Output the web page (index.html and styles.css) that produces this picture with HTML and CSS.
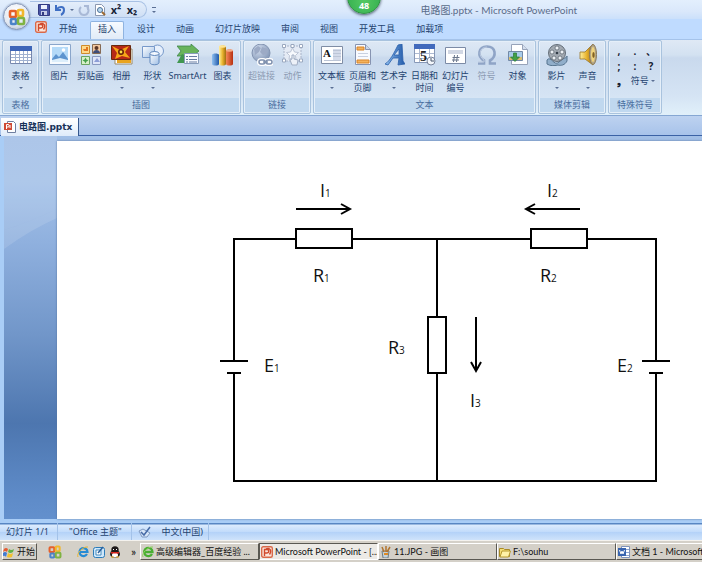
FILE: index.html
```html
<!DOCTYPE html>
<html lang="zh-CN">
<head>
<meta charset="utf-8">
<title>电路图.pptx - Microsoft PowerPoint</title>
<link rel="stylesheet" href="styles.css">
</head>
<body>
<svg class="defs" aria-hidden="true">
  <defs>
    <linearGradient id="gold" x1="0" x2="1"><stop offset="0" stop-color="#fff0a0"/><stop offset=".5" stop-color="#e8b430"/><stop offset="1" stop-color="#a06c10"/></linearGradient>
    <linearGradient id="blue" x1="0" x2="1"><stop offset="0" stop-color="#8fc0f0"/><stop offset="1" stop-color="#2058a8"/></linearGradient>
    <linearGradient id="red" x1="0" x2="1"><stop offset="0" stop-color="#f48858"/><stop offset="1" stop-color="#b83010"/></linearGradient>
    <linearGradient id="pale" x1="0" y1="0" x2="1" y2="1"><stop offset="0" stop-color="#fff"/><stop offset="1" stop-color="#9dbde4"/></linearGradient>
    <radialGradient id="globe" cx=".35" cy=".3" r=".75"><stop offset="0" stop-color="#d4dff0"/><stop offset="1" stop-color="#8094b4"/></radialGradient>
    <symbol id="ppt" viewBox="0 0 12 12"><rect x=".7" y=".7" width="10.600" height="10.600" rx="1.500" fill="#fbe6dc" stroke="#d9694a" stroke-width="1.400"/><path d="M3.500 10V3.500h2.500a1.700 1.700 0 0 1 0 3.500h-2.500M5 3c4-2 6 2 3.500 5.500" fill="none" stroke="#d0492c" stroke-width="1.400"/></symbol>
    <symbol id="pptdoc" viewBox="0 0 12 12"><path d="M3.500.500h6l2 2v9h-8z" fill="#fff" stroke="#6f7fa0"/><path d="M0 2h8v7H0z" fill="#cf4a35"/><path d="M2.500 8V3.500h1.500a1.200 1.200 0 0 1 0 2.500h-1.500M6 4v3" fill="none" stroke="#fff"/></symbol>
    <symbol id="office" viewBox="0 0 18 18"><g fill="none" stroke-width="2.600"><rect x="2" y="3" width="6" height="6" rx="1" stroke="#e5602b"/><rect x="10" y="2" width="5" height="6" rx="1" stroke="#f1b72c"/><rect x="3" y="11" width="5" height="5" rx="1" stroke="#4b83c8"/><rect x="10" y="10" width="6" height="6" rx="1" stroke="#7fb342"/></g></symbol>
  </defs>
</svg>
<div class="app">
  <header class="titlebar">
    <div class="qat">
      <button aria-label="保存"><svg width="12" height="12" viewBox="0 0 12 12"><path d="M.5.500h11v11h-10l-1-1z" fill="#4854a4" stroke="#323b82"/><path d="M3 1h6v4H3z" fill="#eef2fc"/><path d="M3 7h6v4H3z" fill="#c6cde8"/><path d="M4 8h2v3H4z" fill="#323b82"/></svg></button>
      <button aria-label="撤消"><svg width="12" height="12" viewBox="0 0 12 12"><path d="M2 1v5h5M2.500 5.500C5 2 10 2 10 6c0 2-1 4-3 5" fill="none" stroke="#3f6fc4" stroke-width="2"/></svg></button>
      <i class="arrow"></i>
      <button aria-label="重复"><svg width="12" height="12" viewBox="0 0 12 12"><path d="M3 3C0 6 2 11 6 11s6-5 3-8M6 2h4v4" fill="none" stroke="#a9b9d6" stroke-width="2"/></svg></button>
      <button aria-label="打印预览"><svg width="12" height="12" viewBox="0 0 12 12"><path d="M1.500.500h6l3 3v8h-9z" fill="#fff" stroke="#8b98b0"/><circle cx="6" cy="6" r="2.500" fill="#b9d8ef" stroke="#4b6f96"/><path d="M8 8l3 3" stroke="#9b6a34" stroke-width="2"/></svg></button>
      <button class="script">x²</button>
      <button class="script">x₂</button>
    </div>
    <button class="customise" aria-label="自定义快速访问工具栏"><i class="arrow"></i></button>
    <h1>电路图.pptx - Microsoft PowerPoint</h1>
    <button class="orb" aria-label="Office 按钮"><svg width="18" height="18"><use href="#office"/></svg></button>
    <div class="ball">48</div>
  </header>

  <nav class="tabs">
    <svg class="appicon" width="12" height="12"><use href="#ppt"/></svg>
    <button>开始</button><button class="active">插入</button><button>设计</button><button>动画</button><button>幻灯片放映</button><button>审阅</button><button>视图</button><button>开发工具</button><button>加载项</button>
  </nav>

  <main class="ribbon">
    <section class="group">
      <div class="tools">
        <button><svg viewBox="0 0 22 22"><path d="M.5 2.500h21v17H.500z" fill="#fff" stroke="#7787ad"/><path d="M0 2h22v5H0z" fill="#3d65b8"/><path d="M1 10.500h20M1 13.500h20M1 16.500h20M5.500 7v12M9.500 7v12M13.500 7v12M17.500 7v12" stroke="#9fb0cf"/></svg><span>表格</span><i class="arrow"></i></button>
      </div>
      <h2>表格</h2>
    </section>
    <section class="group">
      <div class="tools">
        <button><svg viewBox="0 0 22 22"><path d="M.5.500h21v20H.500z" fill="#f7fbff" stroke="#8aa6cb"/><path d="M3 3h16v15H3z" fill="#b4daf8"/><path d="M3 15l4-5 3 3 4-5 5 7v3H3z" fill="#5c94cf"/><path d="M3 16l8-2 8 2v2H3z" fill="#dceefb"/><circle cx="14.500" cy="6" r="1.800" fill="#fff"/></svg><span>图片</span></button>
        <button><svg viewBox="0 0 22 22"><path d="M1.500 1.500h8v8h-8z" fill="#ffd98a" stroke="#cf8c2c"/><path d="M3 5h3V3h2v4H4z" fill="#e17820"/><path d="M12.500.500h8v9h-8z" fill="#f5c9a0" stroke="#856a55"/><circle cx="16.500" cy="4" r="2" fill="#5b3829"/><path d="M13 9c0-4 7-4 7 0z" fill="#3e4c78"/><path d="M1.500 12.500h8v8h-8z" fill="#d8f0c9" stroke="#6ba562"/><path d="M5.500 13.500l1 2 2 1-2 1-1 2-1-2-2-1 2-1z" fill="#43a04a"/><path d="M12.500 12.500h8v8h-8z" fill="#dfe5f8" stroke="#8a99c0"/><path d="M14 18l3-4 3 4z" fill="#8d9dd6"/></svg><span>剪贴画</span></button>
        <button><svg viewBox="0 0 22 22"><path d="M4 5h17v15H4z" fill="#fff" stroke="#998866"/><path d="M6 7h14v12H6z" fill="#e9a420"/><path d="M.5 1.500h19v14H.500z" fill="#b62817" stroke="#68280e"/><path d="M1 2l8 4 9-4-4 6 5 6-8-2-7 3 2-6z" fill="#f7a718"/><circle cx="10" cy="8" r="3" fill="#682008"/><circle cx="10" cy="8" r="1.400" fill="#ffdf48"/></svg><span>相册</span><i class="arrow"></i></button>
        <button><svg viewBox="0 0 22 22"><circle cx="15.500" cy="7" r="6" fill="#e7f0fc" stroke="#7799ca"/><path d="M.5 2.500h12v11H.500z" fill="url(#pale)" stroke="#7799ca"/><path d="M8 9.500v9c0 3 9 3 9 0v-9" fill="url(#pale)" stroke="#5f87bc"/><ellipse cx="12.500" cy="9.500" rx="4.500" ry="2" fill="#f4f9ff" stroke="#5f87bc"/></svg><span>形状</span><i class="arrow"></i></button>
        <button class="wide"><svg viewBox="0 0 22 22"><path d="M0 2h14V0l8 7-6 5H0l4-5z" fill="#69b45b" stroke="#40864b" stroke-width=".8"/><path d="M0 19l5-9 5 2v7z" fill="#419750"/><path d="M7.500 9.500h14v10h-14z" fill="#f8faff" stroke="#879cbb"/><path d="M9 12.500h2m1 0h8M9 15.500h2m1 0h8M9 18h2m1 0h8" stroke="#667ca1"/></svg><span>SmartArt</span></button>
        <button><svg viewBox="0 0 22 22"><path d="M0 11c0-2 7-2 7 0v9c0 2-7 2-7 0z" fill="url(#blue)"/><path d="M7 3c0-2 7-2 7 0v17c0 2-7 2-7 0z" fill="url(#gold)"/><path d="M14 7c0-2 7-2 7 0v13c0 2-7 2-7 0z" fill="url(#red)"/><ellipse cx="10.500" cy="2.500" rx="3.500" ry="1.200" fill="#ffe596"/><ellipse cx="17.500" cy="6.500" rx="3.500" ry="1.200" fill="#f5ac87"/></svg><span>图表</span></button>
      </div>
      <h2>插图</h2>
    </section>
    <section class="group">
      <div class="tools">
        <button disabled><svg viewBox="0 0 22 22"><circle cx="10" cy="9" r="9" fill="url(#globe)" stroke="#8293b1"/><path d="M3 5l4-3 3 2-2 4-4 3M11 3l6 2-1 5-4 1-3-3" fill="#9caac5"/><g fill="none" stroke="#fff" stroke-width="4"><rect x="8" y="16" width="6" height="4" rx="2"/><rect x="15" y="16" width="6" height="4" rx="2"/></g><g fill="none" stroke="#7f90ae" stroke-width="1.500"><rect x="8" y="16" width="6" height="4" rx="2"/><rect x="15" y="16" width="6" height="4" rx="2"/><path d="M12 18h5"/></g></svg><span>超链接</span></button>
        <button disabled><svg viewBox="0 0 22 22"><path d="M2 2h17v15H2z" fill="#e5ebf5" stroke="#a9b4c9" stroke-dasharray="2 1"/><path d="M10.500 4l2 4 4 .5-3 3 .5 4-3.500-2-3.500 2 .5-4-3-3 4-.5z" fill="#f7f9fd" stroke="#bcc5d5"/><path d="M.5.500h3v3h-3zM9 .5h3v3H9zM17.500.500h3v3h-3zM.5 15h3v3h-3zM17.500 15h3v3h-3z" fill="#fff" stroke="#9aa8bf"/><path d="M10 21l-2-5 2-1v-4h2v4l4 1-1 5z" fill="#edf1f8" stroke="#a2afc4"/></svg><span>动作</span></button>
      </div>
      <h2>链接</h2>
    </section>
    <section class="group">
      <div class="tools">
        <button><svg viewBox="0 0 22 22"><path d="M.5 2.500h21v17H.500z" fill="#fff" stroke="#7f8da5"/><path d="M12 5h8v11h-8z" fill="#d4dbea"/><path d="M12 6.500h8M12 9.500h8M12 12.500h8M3 16.500h17" stroke="#bcc5d6"/><text x="2" y="13" class="serif" font-size="11" font-weight="bold" fill="#111">A</text></svg><span>文本框</span><i class="arrow"></i></button>
        <button><svg viewBox="0 0 22 22"><path d="M3.500.500h10l5 5v15h-15z" fill="#f8faff" stroke="#8794b1"/><path d="M13.500.500v5h5" fill="#cbd7ea" stroke="#8794b1"/><path d="M5 3h7v3H5zM5 16h12v3H5z" fill="#f4b35d" stroke="#d88428"/><path d="M6 9.500h10M6 12.500h10" stroke="#c8d0e1"/></svg><span>页眉和</span><span>页脚</span></button>
        <button><svg viewBox="0 0 22 22"><path fill-rule="evenodd" d="M2 20c5-3 9-11 13-19l4-1 1 17 2 3-7 1 1-7h-6l-5 7zM11 11h5V5z" fill="url(#blue)" stroke="#2c61ac" stroke-width=".8"/></svg><span>艺术字</span><i class="arrow"></i></button>
        <button><svg viewBox="0 0 22 22"><path d="M.5.500h20v18H.500z" fill="#fff" stroke="#8798b7"/><path d="M0 0h21v5H0z" fill="#426abc"/><path d="M1 9.500h19M1 14.500h19M5.500 5v13M15.500 5v13" stroke="#adbad2"/><text x="6" y="17" class="serif" font-size="14" font-weight="bold" fill="#222">5</text><circle cx="17" cy="17" r="4" fill="#f3f6fa" stroke="#77839b"/><path d="M17 14v3h3" fill="none" stroke="#49566d"/></svg><span>日期和</span><span>时间</span></button>
        <button><svg viewBox="0 0 22 22"><path d="M.5 3.500h20v16H.500z" fill="#fff" stroke="#7c8ba6"/><path d="M3 6h15v4H3z" fill="#d2d8e4"/><path d="M9.500 11l-1 7M12.500 11l-1 7M7.500 13.500h7M7 16h7" stroke="#6a768b"/></svg><span>幻灯片</span><span>编号</span></button>
        <button disabled><svg viewBox="0 0 22 22"><path d="M2 19.500h6v-3c-7-4-6-14 3-14s10 10 3 14v3h6" fill="none" stroke="#8fa4c6" stroke-width="2.600"/><path d="M2 18h6v-2c-6-4-5-13 3-13" fill="none" stroke="#bdcbe1"/></svg><span>符号</span></button>
        <button><svg viewBox="0 0 22 22"><path d="M4.500.500h11l5 5v15h-16z" fill="#fff" stroke="#97a3b9"/><path d="M15.500.500v5h5" fill="#d4deed" stroke="#97a3b9"/><path d="M1.500 7.500h14v9h-14z" fill="#a9cce9" stroke="#7289a6"/><path d="M2 13h13v3H2z" fill="#d8bd71"/><path d="M6.500 9h3v4h3l-4.500 4.500L3.500 13h3z" fill="#42a045" stroke="#267936" stroke-width=".7"/></svg><span>对象</span></button>
      </div>
      <h2>文本</h2>
    </section>
    <section class="group">
      <div class="tools">
        <button><svg viewBox="0 0 22 22"><path d="M1 16c4-5 7 7 12 2s7-3 8-6v5c-2 4-6 5-9 4-4 1-8 1-11-1z" fill="#91aeca" stroke="#57748f"/><circle cx="11" cy="9" r="8.500" fill="#a2a9b1" stroke="#646e79"/><g fill="#edf1f5" stroke="#59626c" stroke-width=".7"><circle cx="11" cy="4" r="2"/><circle cx="16" cy="8" r="2"/><circle cx="14" cy="14" r="2"/><circle cx="8" cy="14" r="2"/><circle cx="6" cy="8" r="2"/></g><circle cx="11" cy="9" r="1.300" fill="#333d47"/></svg><span>影片</span><i class="arrow"></i></button>
        <button><svg viewBox="0 0 22 22"><path d="M3 8h5l8-8v21l-8-6H3z" fill="url(#gold)" stroke="#9a7628" stroke-width=".8"/><ellipse cx="16" cy="10.500" rx="3.500" ry="10" fill="#b6a889" stroke="#8b7a59"/><ellipse cx="16" cy="10.500" rx="2" ry="7.500" fill="#f0d37c"/><ellipse cx="16.500" cy="11" rx="1.200" ry="3" fill="#806125"/></svg><span>声音</span><i class="arrow"></i></button>
      </div>
      <h2>媒体剪辑</h2>
    </section>
    <section class="group">
      <div class="symbols">
        <button>,</button><button>.</button><button>、</button>
        <button>;</button><button>:</button><button>?</button>
        <button>❟</button><button class="more">符号 <i class="arrow"></i></button>
      </div>
      <h2>特殊符号</h2>
    </section>
  </main>

  <div class="doctabs"><button><svg width="12" height="12"><use href="#pptdoc"/></svg>电路图.pptx</button></div>

  <div class="workspace">
    <svg class="swoosh" viewBox="0 0 53 383" preserveAspectRatio="none"><path d="M0 94Q26 86 53 73V82Q26 94 0 113z" fill="#fff" opacity=".12"/><path d="M0 0H53V73Q26 86 0 94z" fill="#fff" opacity=".12"/></svg>
    <article class="slide">
      <svg class="circuit" viewBox="0 0 645 378" role="img" aria-label="电路图">
        <g fill="none" stroke="#000" stroke-width="2">
          <path d="M177 219V98H239M295 98H474M530 98H599V219M599 232V340H177V232"/>
          <path d="M380 98V176M380 232V340"/>
          <path d="M239 88h56v19h-56zM474 88h56v19h-56zM371 176h18v56h-18z"/>
          <path d="M163 220h28M170 232h14M585 220h28M592 232h14"/>
          <path d="M239 68h54M284 63l9 5-9 5M523 68h-54M478 63l-9 5 9 5M419 176v54M414 221l5 9 5-9"/>
        </g>
        <g class="marks">
          <text x="263" y="56">I<tspan>1</tspan></text>
          <text x="490" y="56">I<tspan>2</tspan></text>
          <text x="256" y="141">R<tspan>1</tspan></text>
          <text x="483" y="141">R<tspan>2</tspan></text>
          <text x="331" y="213">R<tspan>3</tspan></text>
          <text x="207" y="231">E<tspan>1</tspan></text>
          <text x="560" y="231">E<tspan>2</tspan></text>
          <text x="413" y="266">I<tspan>3</tspan></text>
        </g>
      </svg>
    </article>
  </div>

  <footer class="status">
    <span class="page">幻灯片 1/1</span><span class="theme">"Office 主题"</span>
    <span class="lang"><svg width="13" height="12" viewBox="0 0 13 12"><path d="M1 5l4-2 7 4-3 4H4z" fill="#d7e6f8" stroke="#7f99c0"/><path d="M3 6l3 3 6-8" fill="none" stroke="#466aa6" stroke-width="1.500"/></svg>中文(中国)</span>
  </footer>

  <div class="taskbar">
    <button class="start"><svg width="12" height="12" viewBox="0 0 12 12"><path d="M1 3q2-2 4 0L4 6Q2 4 0 6z" fill="#e65b32"/><path d="M6 3q2 2 5 0l-1 3q-3 2-5 0z" fill="#63b145"/><path d="M0 7q2-2 4 0l-1 4Q2 9 0 10z" fill="#427bd2"/><path d="M5 7q2 2 5 0l-1 4q-3 1-5 0z" fill="#f2c12e"/></svg>开始</button>
    <div class="quick">
      <svg width="14" height="14"><use href="#office" width="14" height="14"/></svg>
      <svg class="first" width="12" height="12" viewBox="0 0 12 12"><path d="M10 8a4 4 0 1 1 .5-2H3" fill="none" stroke="#268bd4" stroke-width="2.200"/><path d="M1 11C-1 8 6 0 11 1" fill="none" stroke="#e8b631"/></svg>
      <svg width="12" height="12" viewBox="0 0 12 12"><rect x=".5" y="1.500" width="11" height="10" rx="2" fill="#cfe7fa" stroke="#2c7cb9"/><path d="M3 4h5v5H3z" fill="#fff" stroke="#458bbd"/><path d="M5 7l5-6" stroke="#2a609c" stroke-width="1.500"/></svg>
      <svg width="12" height="12" viewBox="0 0 12 12"><ellipse cx="6" cy="8" rx="5" ry="4" fill="#1c1818"/><circle cx="6" cy="4" r="3.700" fill="#1c1818"/><ellipse cx="6" cy="9" rx="3" ry="2.600" fill="#fff"/><path d="M2 6h8v1.500H2z" fill="#dc251e"/><path d="M4 3h1v1H4zM7 3h1v1H7z" fill="#fff"/><path d="M2 11h3M7 11h3" stroke="#efab23"/></svg>
      <span>»</span>
    </div>
    <button class="task"><svg width="12" height="12" viewBox="0 0 12 12"><path d="M10 8a4.200 4.200 0 1 1 .5-2H3" fill="none" stroke="#49af32" stroke-width="2.300"/><path d="M1 11C-1 8 6 0 11 1" fill="none" stroke="#90cf5f"/></svg>高级编辑器_百度经验 ...</button>
    <button class="task current"><svg width="12" height="12"><use href="#ppt"/></svg>Microsoft PowerPoint - [...</button>
    <button class="task"><svg width="12" height="12" viewBox="0 0 12 12"><path d="M2 5h7l-1 7H3z" fill="#c4d2da" stroke="#6e7d83"/><path d="M4 6L2 1M6 6V0M7 6l3-5" stroke="#b2742e" stroke-width="1.500"/><path d="M4 8h4" stroke="#de8a23" stroke-width="2"/></svg>11.JPG - 画图</button>
    <button class="task"><svg width="12" height="12" viewBox="0 0 12 12"><path d="M.5 2.500h4l1 1h5v7H.500z" fill="#f6df78" stroke="#a98a26"/><path d="M3 5h8.500l-2 6H1z" fill="#fff2a7" stroke="#b5982f"/></svg>F:\souhu</button>
    <button class="task"><svg width="12" height="12" viewBox="0 0 12 12"><path d="M3.500.500h8v11h-8z" fill="#fff" stroke="#7e93bb"/><path d="M6 3.500h5M6 6.500h5M6 9.500h5" stroke="#8fa6d0"/><path d="M0 2h8v8H0z" fill="#3864af"/><path d="M1.500 4L3 8l1-3 1 3 1.500-4" fill="none" stroke="#fff"/></svg>文档 1 - Microsoft W</button>
  </div>
</div>
</body>
</html>
```
FILE: styles.css
```css
* { box-sizing: border-box; }
body {
  margin: 0;
  font-family: "Noto Sans", "Noto Sans CJK SC", sans-serif;
  font-size: 9px;
  line-height: 12px;
  color: #24436f;
  overflow: hidden;
}
button {
  margin: 0;
  padding: 0;
  border: 0;
  background: none;
  font: inherit;
  color: inherit;
  white-space: nowrap;
}
h1, h2 { margin: 0; font-size: 9px; font-weight: 400; }
svg { display: block; flex: none; }
.defs { position: absolute; width: 0; height: 0; }
.serif { font-family: "Liberation Serif", serif; }
.app {
  display: flex;
  flex-direction: column;
  min-height: 100vh;
  background: #bfdbff;
}
.arrow {
  display: inline-block;
  border: 2px solid transparent;
  border-top-color: #5a6f94;
  border-bottom: 0;
}

/* Title bar */
.titlebar {
  position: relative;
  display: flex;
  align-items: center;
  height: 19px;
  padding: 0 125px 0 30px;
  background: linear-gradient(#e3effd, #dae8fb 60%, #cbe0fb);
}
.qat {
  display: flex;
  align-items: center;
  gap: 4px;
  height: 17px;
  padding: 0 8px;
  border: 1px solid #a8c1e4;
  border-left: 0;
  border-radius: 0 9px 9px 0;
  background: linear-gradient(#e4eefb, #cfdff4);
}
.script {
  width: 12px;
  font-size: 11px;
  font-weight: 700;
  color: #182338;
}
.customise {
  height: 6px;
  margin-left: 5px;
  border-top: 1px solid #5a6f94;
  line-height: 4px;
}
.titlebar h1 {
  margin-left: auto;
  font-family: Lato, "Noto Sans CJK SC", sans-serif;
  font-size: 10px;
  color: #5a6c8a;
  white-space: nowrap;
}
.orb {
  position: absolute;
  left: 3px;
  top: 3px;
  z-index: 1;
  display: grid;
  place-items: center;
  width: 27px;
  height: 27px;
  border: 1px solid #8293b3;
  border-radius: 50%;
  background: radial-gradient(circle at 45% 30%, #fff, #e2e8f2 60%, #a2afc6);
  box-shadow: 0 0 2px #6c81a8;
}
.ball {
  position: absolute;
  left: 52%;
  top: -20px;
  width: 34px;
  height: 34px;
  padding-top: 19px;
  margin-left: -18px;
  border: 1px solid #318f43;
  border-radius: 50%;
  background: radial-gradient(circle at 50% 65%, #53c862, #28a548);
  box-shadow: 0 1px 3px #456;
  color: #fff;
  font-weight: 700;
  text-align: center;
}

/* Ribbon tabs */
.tabs {
  display: flex;
  align-items: flex-end;
  gap: 5px;
  height: 20px;
  padding-left: 35px;
  background: #bfdbff;
}
.appicon { margin-bottom: 6px; margin-right: -1px; }
.tabs button { height: 18px; padding: 0 8px 2px; }
.tabs .active {
  border: 1px solid #8fb3e0;
  border-bottom: 0;
  border-radius: 2px 2px 0 0;
  padding: 0 7px 3px;
  background: linear-gradient(#f6faff, #e1ebf7);
}

/* Ribbon groups */
.ribbon {
  display: flex;
  gap: 2px;
  padding: 0 2px 1px;
  border-top: 1px solid #a5c3ea;
  border-bottom: 1px solid #86a7d3;
  background: linear-gradient(#dfe9f5, #d3e1f1 20%, #c9d9ed 24%, #d5e4f4 75%, #e1f0fa);
}
.group {
  display: flex;
  flex-direction: column;
  border: 1px solid #a9c3de;
  border-radius: 2px;
  box-shadow: inset 0 0 0 1px #e5eff9;
}
.group h2 {
  height: 14px;
  margin: 0 1px 1px;
  line-height: 13px;
  text-align: center;
  color: #4a6d9e;
  background: #c0d8ef;
}
.tools { display: flex; height: 57px; padding: 3px 2px 0; }
.tools button {
  display: flex;
  flex-direction: column;
  align-items: center;
  width: 31px;
}
.tools .wide { width: 39px; }
.tools svg { width: 22px; height: 22px; margin-bottom: 4px; }
.tools .arrow { margin-top: 5px; }
.tools button:disabled { color: #8c9bb3; }
.symbols {
  display: grid;
  grid-template-columns: repeat(3, 16px);
  grid-template-rows: repeat(3, 15px);
  height: 57px;
  padding: 2px 2px 0;
  font-weight: 700;
  color: #16202f;
}
.symbols button { font-size: 10px; }
.symbols .more { grid-column: span 2; font-size: 9px; font-weight: 400; color: #24436f; }
.symbols .more .arrow { margin-bottom: 2px; }

/* Open documents */
.doctabs {
  display: flex;
  height: 20px;
  padding: 2px 1px 0;
  background: linear-gradient(#bdd2f0, #a8c3ea);
  border-bottom: 1px solid #3b62a5;
}
.doctabs button {
  display: flex;
  align-items: center;
  gap: 3px;
  height: 18px;
  padding: 0 6px 0 3px;
  border-right: 1px solid #35588f;
  background: linear-gradient(#fff, #dfebfa);
  font-family: "DejaVu Sans", "Noto Sans CJK SC", sans-serif;
  font-weight: 700;
  color: #173158;
}

/* Slide area */
.workspace {
  position: relative;
  flex: 1;
  padding: 5px 0 0 53px;
  border-left: 4px solid #a9cdf6;
  background: linear-gradient(#a2bfe6, #a3c1e8 12%, #8fb0de 28%, #7196c9 52%, #4d76af 75%, #5e8bc8 94%, #6390cd);
}
.swoosh { position: absolute; left: 0; top: 0; width: 53px; height: 100%; }
.slide { position: relative; height: 100%; background: #fff; box-shadow: 0 0 2px #55749e; }
.circuit { width: 100%; height: auto; }
.marks text { font-family: "Open Sans", "Noto Sans", sans-serif; font-size: 18px; fill: #111; }
.marks tspan { font-size: 10px; }

/* Status bar */
.status {
  display: flex;
  height: 21px;
  border-top: 4px solid #a9cdf6;
  background: linear-gradient(#5886c3 1px, #dcebfd 2px, #c3dcfb 50%, #b2d1f8 52%, #cfe3fb);
}
.status span { display: flex; align-items: center; padding: 0 9px 0 11px; border-right: 1px solid #a3c2e9; }
.status .page { padding-left: 6px; padding-right: 8px; }
.status .lang { gap: 11px; padding: 0 5px 0 6px; }

/* Taskbar */
.taskbar {
  display: flex;
  align-items: center;
  height: 22px;
  padding-left: 2px;
  background: #d4d0c8;
  border-top: 1px solid #f4f2ee;
  font-family: Lato, "Noto Sans CJK SC", sans-serif;
  color: #111;
  overflow: hidden;
}
.start, .task {
  display: flex;
  align-items: center;
  gap: 2px;
  height: 17px;
  border: 1px solid;
  border-color: #fff #5a5852 #5a5852 #fff;
  background: #d4d0c8;
}
.start { flex: 0 0 35px; }
.quick { display: flex; flex: 0 0 103px; align-items: center; gap: 4px; padding-left: 11px; }
.quick .first { margin-left: 11px; }
.quick span { margin-left: 6px; font-size: 12px; }
.task { flex: 0 0 119px; padding-left: 1px; overflow: hidden; }
.task.current { border-color: #5a5852 #fff #fff #5a5852; background: #eceae6; }
```
